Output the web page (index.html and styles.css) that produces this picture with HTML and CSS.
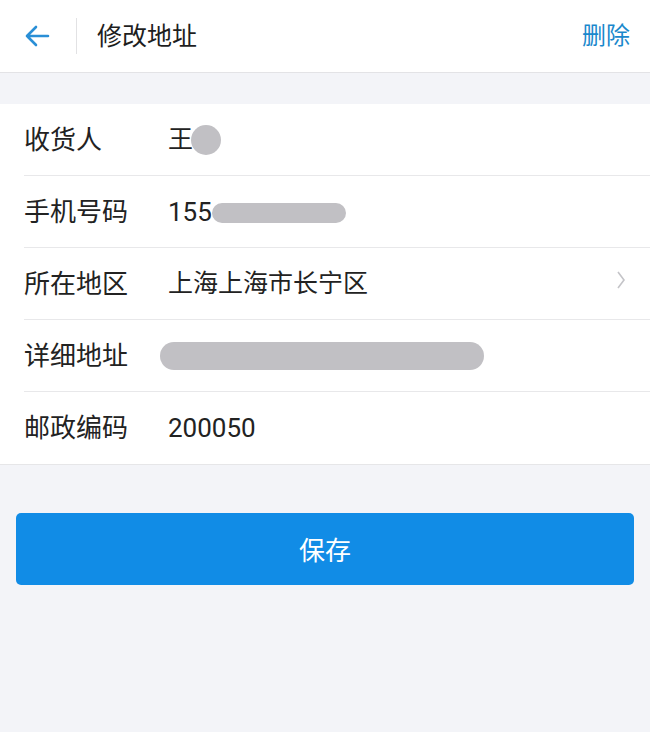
FILE: index.html
```html
<!DOCTYPE html>
<html lang="zh-CN">
<head>
    <meta charset="UTF-8">
    <meta name="viewport" content="width=device-width, initial-scale=1.0">
    <title>修改地址</title>
    <link rel="stylesheet" href="styles.css">
</head>
<body>
    <header class="barra">
        <button class="volver" aria-label="返回">
            <svg width="26" height="24" viewBox="0 0 26 24">
                <path d="M24 12H3M12 3L3 12l9 9" fill="none" stroke="#2a8fd6" stroke-width="2.6" stroke-linecap="round" stroke-linejoin="round"/>
            </svg>
        </button>
        <span class="separador"></span>
        <h1 class="titulo">修改地址</h1>
        <a class="borrar" href="#">删除</a>
    </header>

    <!-- Datos de la dirección -->
    <ul class="formulario">
        <li class="fila">
            <span class="etiqueta">收货人</span>
            <span class="valor">王<i class="oculto circulo"></i></span>
        </li>
        <li class="fila">
            <span class="etiqueta">手机号码</span>
            <span class="valor"><span class="cifras">155</span><i class="oculto telefono"></i></span>
        </li>
        <li class="fila">
            <span class="etiqueta">所在地区</span>
            <span class="valor">上海上海市长宁区</span>
            <svg class="flecha" width="10" height="22" viewBox="0 0 10 22">
                <path d="M2 2l6 8-6 8" fill="none" stroke="#c4c4c8" stroke-width="1.6"/>
            </svg>
        </li>
        <li class="fila">
            <span class="etiqueta">详细地址</span>
            <span class="valor"><i class="oculto direccion"></i></span>
        </li>
        <li class="fila">
            <span class="etiqueta">邮政编码</span>
            <span class="valor"><span class="cifras">200050</span></span>
        </li>
    </ul>

    <div class="acciones">
        <button class="guardar">保存</button>
    </div>
</body>
</html>
```

FILE: styles.css
```css
/* Estilos generales */
body {
    margin: 0;
    background-color: #f3f4f8;
    font-family: Roboto, "Noto Sans CJK SC", sans-serif;
    color: #222;
}

.barra {
    display: flex;
    align-items: center;
    height: 72px;
    background-color: #fff;
    border-bottom: 1px solid #e3e3e6;
    padding: 0 20px 0 24px;
}

.volver {
    display: flex;
    align-items: center;
    padding: 0;
    border: none;
    background: none;
    cursor: pointer;
}

.separador {
    width: 1px;
    height: 36px;
    background-color: #e2e2e4;
    margin: 0 20px 0 26px;
}

.titulo {
    flex: 1;
    margin: 0;
    font-size: 25px;
    font-weight: normal;
    line-height: 1;
    color: #1e1e1e;
}

.borrar {
    font-size: 24px;
    line-height: 1;
    color: #1a88cc;
    text-decoration: none;
}

/* Lista del formulario */
.formulario {
    list-style: none;
    margin: 31px 0 0;
    padding: 0 0 0 24px;
    background-color: #fff;
    border-bottom: 1px solid #e6e6e8;
}

.fila {
    display: flex;
    align-items: center;
    height: 71px;
    border-bottom: 1px solid #e8e8ea;
    padding-right: 24px;
}

.fila:last-child {
    border-bottom: none;
    height: 72px;
}

.etiqueta {
    width: 144px;
    font-size: 26px;
    line-height: 1;
}

.valor {
    flex: 1;
    display: flex;
    align-items: center;
    font-size: 25px;
    line-height: 1;
}

.cifras {
    font-size: 26px;
}

.flecha {
    display: block;
    margin-bottom: 6px;
}

/* Trazos grises sobre los datos privados */
.oculto {
    display: inline-block;
    background-color: #c1c0c4;
}

.circulo {
    width: 30px;
    height: 30px;
    border-radius: 50%;
    margin-left: -2px;
}

.telefono {
    width: 134px;
    height: 20px;
    border-radius: 10px;
    margin-top: 2px;
}

.direccion {
    width: 324px;
    height: 28px;
    border-radius: 14px;
    margin-left: -8px;
}

.acciones {
    padding: 48px 16px;
}

.guardar {
    width: 100%;
    height: 72px;
    border: none;
    border-radius: 5px;
    background-color: #118ce6;
    color: #fff;
    font-family: "Noto Sans CJK SC", sans-serif;
    font-size: 26px;
    line-height: 1;
    cursor: pointer;
}
```
